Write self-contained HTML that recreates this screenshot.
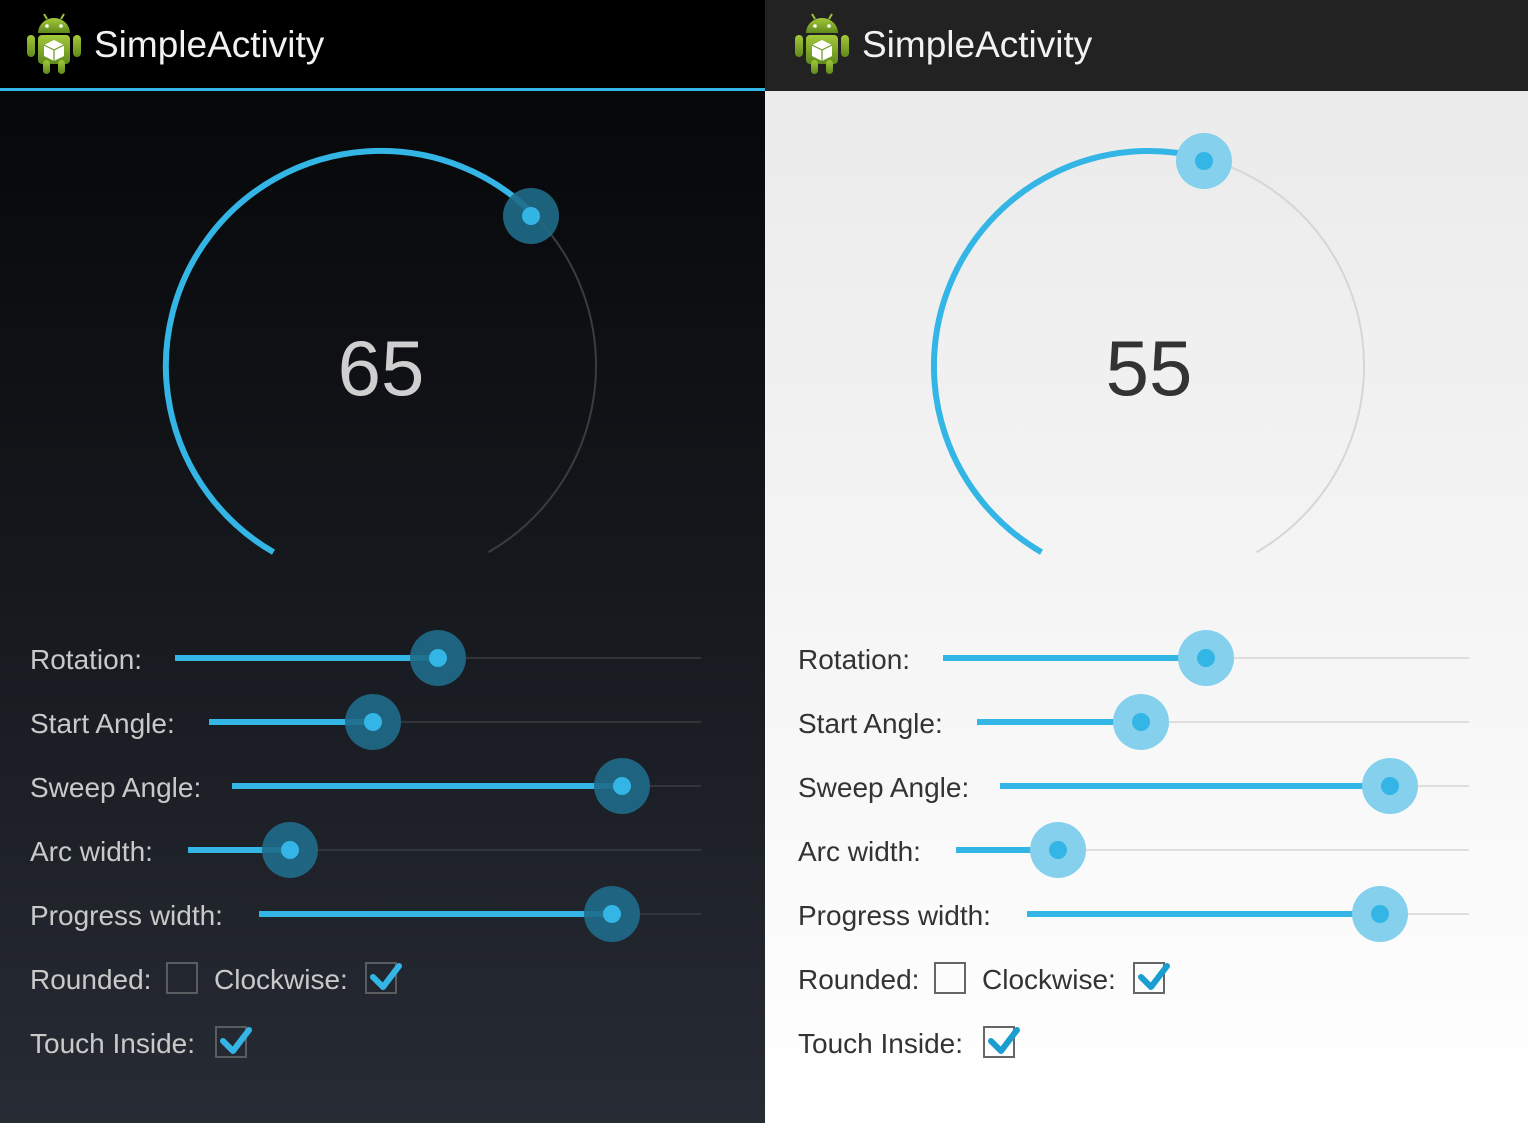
<!DOCTYPE html>
<html><head><meta charset="utf-8"><style>
html,body{margin:0;padding:0;width:1528px;height:1123px;overflow:hidden;background:#000}
svg{display:block}
text{font-family:"Liberation Sans",sans-serif}
</style></head><body>
<svg width="1528" height="1123" viewBox="0 0 1528 1123" xmlns="http://www.w3.org/2000/svg">
<defs>
<linearGradient id="gd" x1="0" y1="0" x2="0" y2="1"><stop offset="0" stop-color="#030405"/><stop offset="1" stop-color="#272b34"/></linearGradient>
<linearGradient id="gl" x1="0" y1="0" x2="0" y2="1"><stop offset="0" stop-color="#e9e9e9"/><stop offset="1" stop-color="#ffffff"/></linearGradient>
<linearGradient id="ag" x1="0" y1="0" x2="0" y2="1"><stop offset="0" stop-color="#a4c83a"/><stop offset="1" stop-color="#5f8a1c"/></linearGradient>
<g id="droid">
<line x1="17" y1="2" x2="20" y2="7" stroke="#9cc23a" stroke-width="2"/>
<line x1="37" y1="2" x2="34" y2="7" stroke="#9cc23a" stroke-width="2"/>
<path d="M11 21 A16 15 0 0 1 43 21 Z" fill="url(#ag)"/>
<circle cx="20" cy="14" r="1.8" fill="#fff"/><circle cx="34" cy="14" r="1.8" fill="#fff"/>
<rect x="11" y="23" width="32" height="29" rx="4" fill="url(#ag)"/>
<rect x="0" y="23" width="8" height="22" rx="4" fill="url(#ag)"/>
<rect x="46" y="23" width="8" height="22" rx="4" fill="url(#ag)"/>
<rect x="16" y="48" width="7" height="14" rx="3.5" fill="url(#ag)"/>
<rect x="31" y="48" width="7" height="14" rx="3.5" fill="url(#ag)"/>
<path d="M27 28 L37 33 L37 44 L27 49 L17 44 L17 33 Z" fill="#fff"/>
<path d="M17 33 L27 38 L37 33 M27 38 L27 49" stroke="#6b9a22" stroke-width="1.2" fill="none"/>
</g>
</defs>
<!-- left -->
<rect x="0" y="0" width="765" height="1123" fill="url(#gd)"/>
<rect x="0" y="0" width="765" height="88" fill="#000"/>
<rect x="0" y="88" width="765" height="3" fill="#33b5e5"/>
<use href="#droid" x="27" y="12"/>
<text x="94" y="57" font-size="37" fill="#f2f2f2">SimpleActivity</text>
<path d="M533 214 A215 215 0 0 1 488.5 552.2" fill="none" stroke="#3a3c40" stroke-width="2"/>
<path d="M273.5 552.2 A215 215 0 1 1 533 214" fill="none" stroke="#33b5e5" stroke-width="6"/>
<circle cx="531" cy="216" r="28" fill="#1f6b8a" opacity="0.9"/>
<circle cx="531" cy="216" r="9" fill="#33b5e5"/>
<text x="381" y="395" font-size="78" fill="#cfcfcf" text-anchor="middle">65</text>
<g font-size="28" fill="#c9c9c9">
<text x="30" y="669">Rotation:</text>
<text x="30" y="733">Start Angle:</text>
<text x="30" y="797">Sweep Angle:</text>
<text x="30" y="861">Arc width:</text>
<text x="30" y="925">Progress width:</text>
<text x="30" y="989">Rounded:</text>
<text x="214" y="989">Clockwise:</text>
<text x="30" y="1053">Touch Inside:</text>
</g>
<g stroke="#3a3c40" stroke-width="1.5">
<line x1="175" y1="658" x2="701" y2="658"/><line x1="209" y1="722" x2="701" y2="722"/>
<line x1="232" y1="786" x2="701" y2="786"/><line x1="188" y1="850" x2="701" y2="850"/>
<line x1="259" y1="914" x2="701" y2="914"/>
</g>
<g stroke="#33b5e5" stroke-width="6">
<line x1="175" y1="658" x2="438" y2="658"/><line x1="209" y1="722" x2="373" y2="722"/>
<line x1="232" y1="786" x2="622" y2="786"/><line x1="188" y1="850" x2="290" y2="850"/>
<line x1="259" y1="914" x2="612" y2="914"/>
</g>
<g fill="#1f6b8a" opacity="0.9">
<circle cx="438" cy="658" r="28"/><circle cx="373" cy="722" r="28"/><circle cx="622" cy="786" r="28"/><circle cx="290" cy="850" r="28"/><circle cx="612" cy="914" r="28"/>
</g>
<g fill="#33b5e5">
<circle cx="438" cy="658" r="9"/><circle cx="373" cy="722" r="9"/><circle cx="622" cy="786" r="9"/><circle cx="290" cy="850" r="9"/><circle cx="612" cy="914" r="9"/>
</g>
<g fill="none" stroke="#5a5c60" stroke-width="2">
<rect x="167" y="963" width="30" height="30"/><rect x="366" y="963" width="30" height="30"/><rect x="216" y="1027" width="30" height="30"/>
</g>
<g fill="none" stroke="#33b5e5" stroke-width="6" stroke-linecap="round" stroke-linejoin="round">
<path d="M373 977 L383 987 L399 966"/><path d="M223 1041 L233 1051 L249 1030"/>
</g>
<!-- right -->
<rect x="765" y="0" width="763" height="1123" fill="url(#gl)"/>
<rect x="765" y="0" width="763" height="91" fill="#222222"/>
<use href="#droid" x="795" y="12"/>
<text x="862" y="57" font-size="37" fill="#f2f2f2">SimpleActivity</text>
<path d="M1204.6 158.3 A215 215 0 0 1 1256.5 552.2" fill="none" stroke="#d6d6d6" stroke-width="2"/>
<path d="M1041.5 552.2 A215 215 0 0 1 1204.6 158.3" fill="none" stroke="#33b5e5" stroke-width="6"/>
<circle cx="1204" cy="161" r="28" fill="#85d0ec"/>
<circle cx="1204" cy="161" r="9" fill="#33b5e5"/>
<text x="1149" y="395" font-size="78" fill="#333" text-anchor="middle">55</text>
<g font-size="28" fill="#333">
<text x="798" y="669">Rotation:</text>
<text x="798" y="733">Start Angle:</text>
<text x="798" y="797">Sweep Angle:</text>
<text x="798" y="861">Arc width:</text>
<text x="798" y="925">Progress width:</text>
<text x="798" y="989">Rounded:</text>
<text x="982" y="989">Clockwise:</text>
<text x="798" y="1053">Touch Inside:</text>
</g>
<g stroke="#d6d6d6" stroke-width="1.5">
<line x1="943" y1="658" x2="1469" y2="658"/><line x1="977" y1="722" x2="1469" y2="722"/>
<line x1="1000" y1="786" x2="1469" y2="786"/><line x1="956" y1="850" x2="1469" y2="850"/>
<line x1="1027" y1="914" x2="1469" y2="914"/>
</g>
<g stroke="#33b5e5" stroke-width="6">
<line x1="943" y1="658" x2="1206" y2="658"/><line x1="977" y1="722" x2="1141" y2="722"/>
<line x1="1000" y1="786" x2="1390" y2="786"/><line x1="956" y1="850" x2="1058" y2="850"/>
<line x1="1027" y1="914" x2="1380" y2="914"/>
</g>
<g fill="#85d0ec">
<circle cx="1206" cy="658" r="28"/><circle cx="1141" cy="722" r="28"/><circle cx="1390" cy="786" r="28"/><circle cx="1058" cy="850" r="28"/><circle cx="1380" cy="914" r="28"/>
</g>
<g fill="#33b5e5">
<circle cx="1206" cy="658" r="9"/><circle cx="1141" cy="722" r="9"/><circle cx="1390" cy="786" r="9"/><circle cx="1058" cy="850" r="9"/><circle cx="1380" cy="914" r="9"/>
</g>
<g fill="none" stroke="#666" stroke-width="2">
<rect x="935" y="963" width="30" height="30"/><rect x="1134" y="963" width="30" height="30"/><rect x="984" y="1027" width="30" height="30"/>
</g>
<g fill="none" stroke="#1a9ed0" stroke-width="6" stroke-linecap="round" stroke-linejoin="round">
<path d="M1141 977 L1151 987 L1167 966"/><path d="M991 1041 L1001 1051 L1017 1030"/>
</g>
</svg>
</body></html>
